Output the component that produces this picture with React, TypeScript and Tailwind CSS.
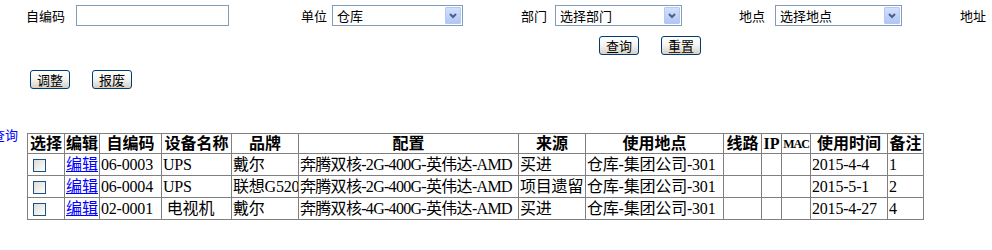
const cjk = "font-['Liberation_Serif','Noto_Sans_CJK_SC',serif]";
const ui = "font-['Noto_Sans_CJK_SC',sans-serif]";

const rows = [
  { code: "06-0003", name: "UPS", brand: "戴尔", cfg: "奔腾双核-2G-400G-英伟达-AMD", src: "买进", loc: "仓库-集团公司-301", date: "2015-4-4", note: "1" },
  { code: "06-0004", name: "UPS", brand: "联想G520", cfg: "奔腾双核-2G-400G-英伟达-AMD", src: "项目遗留", loc: "仓库-集团公司-301", date: "2015-5-1", note: "2" },
  { code: "02-0001", name: " 电视机", brand: "戴尔", cfg: "奔腾双核-4G-400G-英伟达-AMD", src: "买进", loc: "仓库-集团公司-301", date: "2015-4-27", note: "4" },
];

const heads = ["选择", "编辑", "自编码", "设备名称", "品牌", "配置", "来源", "使用地点", "线路", "IP", "MAC", "使用时间", "备注"];
const widths = [37, 35, 62, 70, 67, 220, 67, 138, 38, 20, 29, 77, 36];

function Select({ value, w }: { value: string; w: string }) {
  return (
    <div className={`flex h-[21px] items-stretch border border-[#7f9db9] bg-white ${w}`}>
      <span className="flex-1 pl-[4px] text-[13px] leading-[19px]">{value}</span>
      <span className="m-px flex w-[16px] items-center justify-center rounded-[1px] border border-[#b6c8f0] bg-linear-to-b from-[#d3e0fd] to-[#b1c6f5]">
        <svg width="8" height="6" viewBox="0 0 8 6">
          <polyline points="1,1 4,4 7,1" fill="none" stroke="#4d6185" strokeWidth="2" />
        </svg>
      </span>
    </div>
  );
}

function Btn({ children }: { children: React.ReactNode }) {
  return (
    <button className="h-[19px] w-[40px] rounded-[3px] border border-[#003c74] bg-linear-to-b from-white via-[#f4f3ee] to-[#d6d0c5] p-0 text-[13px] leading-[17px] text-black">
      {children}
    </button>
  );
}

function Box() {
  return (
    <span className="ml-[4px] mt-[2px] block h-[13px] w-[13px] border border-[#1c5180] bg-linear-to-br from-[#dcdcd7] to-white" />
  );
}

export default function App() {
  return (
    <div className={`h-[250px] w-[992px] overflow-hidden bg-white text-black ${ui}`}>
      <div className="flex h-[21px] items-center mt-[5px] text-[13px]">
        <span className="w-[65px] text-right">自编码</span>
        <div className="ml-[11px] h-[21px] w-[153px] border border-[#7f9db9] bg-white" />
        <span className="w-[98px] text-right">单位</span>
        <div className="ml-[5px]"><Select value="仓库" w="w-[131px]" /></div>
        <span className="w-[84px] text-right">部门</span>
        <div className="ml-[8px]"><Select value="选择部门" w="w-[127px]" /></div>
        <span className="w-[83px] text-right">地点</span>
        <div className="ml-[10px]"><Select value="选择地点" w="w-[127px]" /></div>
        <span className="w-[84px] text-right">地址</span>
      </div>

      <div className="mt-[10px] flex pl-[599px] gap-[22px]">
        <Btn>查询</Btn>
        <Btn>重置</Btn>
      </div>

      <div className="mt-[15px] flex pl-[30px] gap-[22px]">
        <Btn>调整</Btn>
        <Btn>报废</Btn>
      </div>

      <div className="mt-[39px] flex items-start">
        <span className="-ml-[8px] w-[26px] shrink-0 text-[13px] leading-[14px] text-[#0000ff]">查询</span>
        <table className={`ml-[9px] mt-[5px] w-[897px] table-fixed border-collapse border border-[#808080] text-[16px] ${cjk}`}>
          <colgroup>
            {widths.map((w, i) => (
              <col key={i} style={{ width: w }} />
            ))}
          </colgroup>
          <thead>
            <tr className="h-[20px]">
              {heads.map((h) => (
                <th
                  key={h}
                  className={`overflow-hidden whitespace-nowrap border border-[#808080] px-0 py-0 text-center font-bold leading-[18px] ${h === "MAC" ? "text-[12px] tracking-[-1px]" : ""}`}
                >
                  {h}
                </th>
              ))}
            </tr>
          </thead>
          <tbody>
            {rows.map((r) => (
              <tr key={r.code} className="h-[22px]">
                <td className="border border-[#808080] px-px py-0 align-middle"><Box /></td>
                <td className="border border-[#808080] px-px py-0 leading-[18px]">
                  <a href="#" className="text-[#0000ff] underline">编辑</a>
                </td>
                {[r.code, r.name, r.brand, r.cfg, r.src, r.loc, "", "", "", r.date, r.note].map((v, i) => (
                  <td
                    key={i}
                    className={`overflow-hidden whitespace-pre border border-[#808080] px-px py-0 leading-[18px] ${i === 3 ? "tracking-[-0.7px]" : "tracking-[-0.2px]"}`}
                  >
                    {v}
                  </td>
                ))}
              </tr>
            ))}
          </tbody>
        </table>
      </div>
    </div>
  );
}
